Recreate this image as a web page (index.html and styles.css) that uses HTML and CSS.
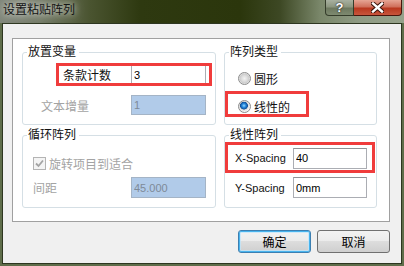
FILE: index.html
```html
<!DOCTYPE html>
<html lang="zh">
<head>
    <meta charset="UTF-8">
    <title>设置粘贴阵列</title>
    <link rel="stylesheet" href="styles.css">
</head>
<body>
    <div class="window">
        <div class="titlebar">
            <span class="title">设置粘贴阵列</span>
            <div class="caption">
                <span class="cap help">?</span>
                <span class="cap close">
                    <svg width="13" height="11" viewBox="0 0 13 11">
                        <path d="M2 1.5 L11 9.5 M11 1.5 L2 9.5" stroke="#3a1208" stroke-width="4.4" stroke-linecap="square"/>
                        <path d="M2 1.5 L11 9.5 M11 1.5 L2 9.5" stroke="#fff" stroke-width="2.4" stroke-linecap="square"/>
                    </svg>
                </span>
            </div>
        </div>

        <div class="client">
            <div class="panel">
                <fieldset class="group">
                    <legend>放置变量</legend>
                    <div class="row mark count-row">
                        <label>条款计数</label>
                        <input class="field" type="text" value="3">
                    </div>
                    <div class="row step-row">
                        <label class="off">文本增量</label>
                        <input class="field dis" type="text" value="1" disabled>
                    </div>
                </fieldset>

                <fieldset class="group">
                    <legend>阵列类型</legend>
                    <div class="row radio-row">
                        <span class="radio"></span>
                        <label>圆形</label>
                    </div>
                    <div class="row radio-row mark">
                        <span class="radio on"></span>
                        <label>线性的</label>
                    </div>
                </fieldset>

                <fieldset class="group">
                    <legend>循环阵列</legend>
                    <div class="row check-row">
                        <span class="check">
                            <svg width="11" height="11" viewBox="0 0 11 11">
                                <path d="M2 5.5 L4.5 8 L9 2.5" fill="none" stroke="#a4a4a4" stroke-width="1.8"/>
                            </svg>
                        </span>
                        <label class="off">旋转项目到适合</label>
                    </div>
                    <div class="row gap-row">
                        <label class="off">间距</label>
                        <input class="field dis" type="text" value="45.000" disabled>
                    </div>
                </fieldset>

                <fieldset class="group">
                    <legend>线性阵列</legend>
                    <div class="row mark xs-row">
                        <label class="lat">X-Spacing</label>
                        <input class="field" type="text" value="40">
                    </div>
                    <div class="row ys-row">
                        <label class="lat">Y-Spacing</label>
                        <input class="field" type="text" value="0mm">
                    </div>
                </fieldset>
            </div>

            <div class="actions">
                <button class="btn default">确定</button>
                <button class="btn">取消</button>
            </div>
        </div>
    </div>
</body>
</html>
```

FILE: styles.css
```css
body {
    margin: 0;
    font-family: "Liberation Sans", "Noto Sans CJK SC", sans-serif;
    font-size: 12px;
    color: #111;
}
.window {
    width: 404px;
    height: 266px;
    overflow: hidden;
    background: #5f6d4a;
}

/* title bar */
.titlebar {
    height: 23px;
    display: flex;
    align-items: flex-start;
    background: linear-gradient(90deg, #80877a 0, #747b68 40px, #4a5430 90px, #2e3910 140px, #2b360c 240px, #3d4824 280px, #7a876a 320px, #8f9b84 360px, #96a28b 404px);
}
.title {
    padding: 3px 0 0 3px;
    line-height: 15px;
    color: #141414;
    text-shadow: 0 0 6px rgba(255,255,255,.8), 0 0 12px rgba(255,255,255,.6);
}
.caption {
    margin-left: auto;
    margin-right: 2px;
    display: flex;
}
.cap {
    height: 16px;
    box-sizing: border-box;
    display: flex;
    align-items: center;
    justify-content: center;
    border: 1px solid #343c2a;
    border-top: none;
}
.help {
    width: 29px;
    border-radius: 0 0 0 4px;
    background: linear-gradient(#a8b0a0 0, #8c967f 45%, #6d785f 55%, #7e8a70 100%);
    color: #fff;
    font-weight: bold;
    font-size: 13px;
    text-shadow: 0 0 2px #222, 0 0 1px #222;
}
.close {
    width: 48px;
    border-left: none;
    border-color: #4a150c;
    border-radius: 0 0 4px 0;
    background: linear-gradient(#e6a594 0, #d0705c 45%, #b9381f 55%, #c8553c 100%);
}

/* client */
.client {
    margin-left: 2px;
    width: 400px;
    height: 241px;
    box-sizing: border-box;
    border: 1px solid #2d3620;
    background: #f0f0f0;
}
.panel {
    margin: 14px 0 0 9px;
    width: 378px;
    height: 184px;
    box-sizing: border-box;
    border: 1px solid #a0a0a0;
    background: #fff;
    padding: 5px 0 0 9px;
    display: grid;
    grid-template-columns: 194px 153px;
    grid-template-rows: 81px 81px;
    column-gap: 8px;
    row-gap: 2px;
    align-content: start;
}
.group {
    margin: 0;
    padding: 0 0 0 4px;
    min-width: 0;
    box-sizing: border-box;
    border: 1px solid #d5dfe5;
    border-radius: 3px;
}
.group legend {
    padding: 0 3px 0 1px;
    line-height: 16px;
    color: #111;
}

.row {
    display: flex;
    align-items: center;
}
.row label {
    flex: none;
}
.off {
    color: #a3a3a3;
}
.lat {
    font-size: 11px;
}
.mark {
    outline: 3px solid #f03c3c;
}
.field {
    box-sizing: border-box;
    height: 20px;
    margin: 0;
    padding: 0 2px;
    border: 1px solid #abadb3;
    border-top-color: #8f9296;
    background: #fff;
    color: #000;
    font: 11px "Liberation Sans", sans-serif;
    outline: none;
}
.field.dis {
    background: #b1cbe9;
    border-color: #a4b4c6;
    color: #7e8a98;
}

/* 放置变量 */
.count-row {
    margin: 6px 0 0 32px;
    width: 150px;
    height: 17px;
}
.count-row label {
    width: 68px;
    padding-left: 4px;
}
.count-row .field {
    width: 75px;
    height: 19px;
}
.step-row {
    margin: 12px 0 0 14px;
}
.step-row label {
    width: 90px;
}
.step-row .field {
    width: 75px;
}

/* 阵列类型 */
.radio-row {
    margin: 10px 0 0 9px;
    height: 16px;
    gap: 3px;
}
.radio-row.mark {
    margin: 8px 0 0 -1px;
    width: 78px;
    height: 20px;
    box-sizing: border-box;
    padding: 4px 0 0 10px;
}
.radio {
    width: 13px;
    height: 13px;
    box-sizing: border-box;
    border-radius: 50%;
    border: 1px solid #8b8b8b;
    background: radial-gradient(circle, #f2f2f2 0, #dcdcdc 3px, #cdcdcd 4.5px, #f6f6f6 6px);
}
.radio.on {
    background: radial-gradient(circle at 45% 42%, #9ad8ff 0, #2a8de0 1.8px, #0f4f98 3.6px, #dcdcdc 4.2px, #f6f6f6 6px);
}

/* 循环阵列 */
.check-row {
    margin: 12px 0 0 6px;
    height: 16px;
    gap: 3px;
}
.check {
    width: 13px;
    height: 13px;
    box-sizing: border-box;
    border: 1px solid #b4b4b4;
    background: #f4f4f4;
    display: flex;
}
.gap-row {
    margin: 6px 0 0 6px;
}
.gap-row label {
    width: 98px;
}
.gap-row .field {
    width: 75px;
    height: 21px;
}

/* 线性阵列 */
.xs-row {
    margin: 2px 0 0 -1px;
    width: 144px;
    height: 25px;
    box-sizing: border-box;
    padding: 1px 0 0 7px;
}
.xs-row label,
.ys-row label {
    width: 58px;
}
.xs-row .field,
.ys-row .field {
    width: 74px;
    height: 21px;
}
.ys-row {
    margin: 7px 0 0 6px;
}

/* buttons */
.actions {
    display: flex;
    justify-content: flex-end;
    gap: 6px;
    margin: 8px 11px 0 0;
}
.btn {
    width: 73px;
    height: 23px;
    box-sizing: border-box;
    padding: 0;
    border: 1px solid #707070;
    border-radius: 3px;
    background: linear-gradient(#f2f2f2 0, #ebebeb 50%, #dddddd 50%, #cfcfcf 100%);
    color: #000;
    font: 12px "Noto Sans CJK SC", sans-serif;
}
.btn.default {
    border-color: #3c7fb1;
    box-shadow: inset 0 0 0 1px #48b4ee, inset 0 0 0 2px rgba(190,230,252,.7);
}
```
